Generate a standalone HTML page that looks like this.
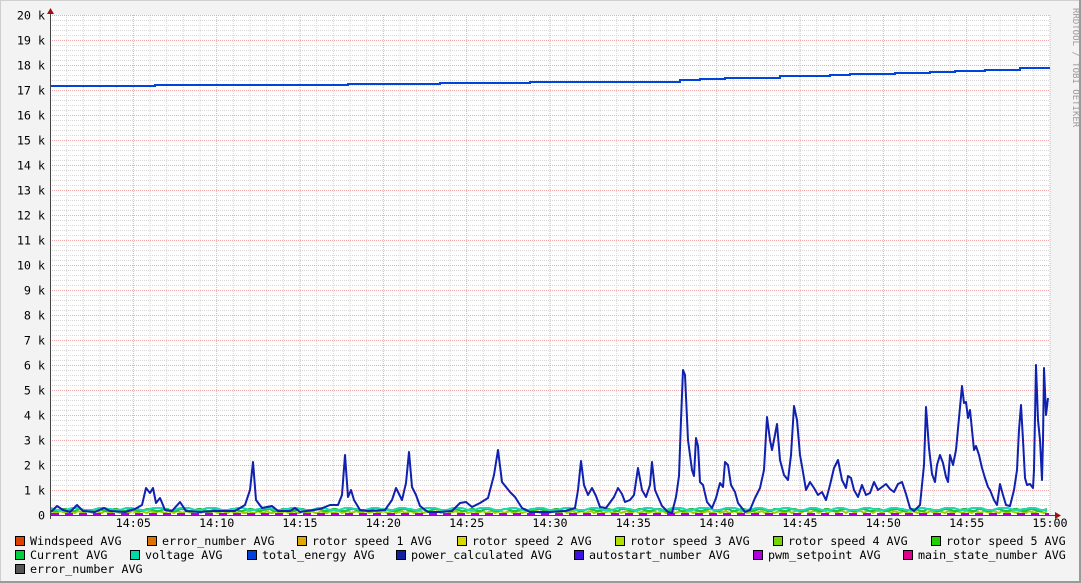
<!DOCTYPE html>
<html><head><meta charset="utf-8"><style>
html,body{margin:0;padding:0;background:#f3f3f3}
svg{display:block}
text{font-family:"DejaVu Sans Mono","Liberation Mono",monospace;font-size:11.7px;fill:#000}
</style></head><body>
<svg id="s" width="1081" height="583" xmlns="http://www.w3.org/2000/svg">
<rect x="0" y="0" width="1081" height="583" fill="#f3f3f3"/>
<rect x="0.5" y="0.5" width="1080" height="582" fill="none" stroke="#cfcfcf"/>
<line x1="0" y1="582" x2="1081" y2="582" stroke="#9a9a9a" stroke-width="2"/>
<line x1="1080" y1="0" x2="1080" y2="583" stroke="#9a9a9a" stroke-width="2"/>
<rect x="50" y="15" width="1000" height="500" fill="#ffffff"/>
<g id="grid"></g>
<g id="data"></g>
<line x1="50" y1="515.5" x2="1056" y2="515.5" stroke="#444"/>
<line x1="50.5" y1="10" x2="50.5" y2="519" stroke="#444"/>
<path d="M47,14 L54,14 L50.5,8 Z" fill="#a01010"/>
<path d="M1055,512 L1055,519 L1061,515.5 Z" fill="#a01010"/>
<text x="1073" y="8" transform="rotate(90 1073 8)" style="font-size:9px;fill:#999">RRDTOOL / TOBI OETIKER</text>
<g id="lab"></g>
<g id="leg"></g>
</svg>
<script>
var NS="http://www.w3.org/2000/svg";
function el(p,t,a,txt){var e=document.createElementNS(NS,t);for(var k in a)e.setAttribute(k,a[k]);if(txt!=null)e.textContent=txt;p.appendChild(e);return e;}
var g=document.getElementById('grid'),lab=document.getElementById('lab'),leg=document.getElementById('leg'),d=document.getElementById('data');
for(var i=1;i<60;i++){var x=50+i*1000/60;if(i%5==0)continue;el(g,'line',{x1:x,y1:15,x2:x,y2:515,stroke:'#d8d8d8','stroke-dasharray':'1,1'});}
for(var j=0;j<100;j++){if(j%5==0)continue;var y=515-j*5+0.5;el(g,'line',{x1:50,y1:y,x2:1050,y2:y,stroke:'#d8d8d8','stroke-dasharray':'1,1'});}
for(var i=1;i<=12;i++){var x=50+i*1000/12;el(g,'line',{x1:x,y1:15,x2:x,y2:515,stroke:'#f0a8a8','stroke-dasharray':'1,1'});
 var t=i==12?'15:00':'14:'+(i*5<10?'0':'')+i*5;el(lab,'text',{x:x,y:527,'text-anchor':'middle'},t);}
for(var j=0;j<=20;j++){var y=515-j*25+0.5;if(j>0)el(g,'line',{x1:50,y1:y,x2:1050,y2:y,stroke:'#f0a8a8','stroke-dasharray':'1,1'});
 el(lab,'text',{x:45,y:y+4,'text-anchor':'end'},j==0?'0':j+' k');}
function lowline(y,c,w,n){var p=[];for(var x=51;x<=1049;x+=3){p.push(x+','+(y+Math.round(Math.sin(x*n)*1.2)));}el(d,'polyline',{points:p.join(' '),fill:'none',stroke:c,'stroke-width':w});}
lowline(512,'#9cd000',2,0.7);lowline(510,'#20c040',2,0.37);lowline(509,'#20d8b0',2,0.23);
el(d,'line',{x1:51,y1:514,x2:1049,y2:514,stroke:'#b000e0','stroke-width':2,'stroke-dasharray':'8,6'});
var te=[[51,86],[155,86],[155,85],[348,85],[348,84],[440,84],[440,83],[530,83],[530,82],[630,82],[680,80],[700,79],[725,78],[780,76],[830,75],[850,74],[895,73],[930,72],[955,71],[985,70],[1020,68],[1049,67]];
var tp=[];for(var i=0;i<te.length;i++){if(i>0)tp.push(te[i][0]+','+te[i-1][1]);tp.push(te[i][0]+','+te[i][1]);}
el(d,'polyline',{points:tp.join(' '),fill:'none',stroke:'#0044dd','stroke-width':2});
var k=[[51,512],[57,506],[63,510],[70,512],[77,505],[83,511],[95,512],[104,508],[110,511],[125,512],[135,509],[142,505],[146,488],[150,493],[153,488],[156,503],[160,498],[165,510],[172,511],[180,502],[186,511],[200,512],[215,511],[235,511],[245,505],[250,490],[253,462],[256,500],[262,508],[272,506],[278,511],[290,511],[295,508],[300,512],[320,509],[330,505],[338,505],[342,495],[345,455],[348,497],[351,490],[354,500],[360,510],[368,511],[385,510],[392,500],[396,488],[402,500],[406,483],[409,452],[412,487],[416,495],[420,506],[428,512],[440,512],[452,511],[460,503],[466,502],[472,507],[480,503],[488,498],[494,475],[498,450],[502,482],[510,492],[515,497],[522,508],[530,512],[540,512],[550,512],[565,511],[575,508],[578,490],[581,461],[584,485],[588,495],[592,488],[596,496],[600,507],[606,508],[614,497],[618,488],[622,494],[625,502],[630,500],[634,495],[638,468],[642,490],[646,497],[650,485],[652,462],[655,490],[658,497],[662,506],[668,512],[672,513],[676,497],[679,476],[681,420],[683,370],[685,375],[688,440],[692,470],[694,476],[696,438],[698,446],[700,482],[703,485],[707,502],[712,508],[716,498],[720,483],[723,487],[725,462],[728,465],[731,485],[735,492],[738,503],[745,512],[750,510],[755,498],[760,488],[764,470],[767,417],[770,440],[772,450],[774,440],[777,424],[780,460],[784,475],[788,480],[791,455],[794,406],[797,420],[800,455],[803,472],[806,490],[810,482],[814,488],[818,495],[822,492],[826,500],[830,485],[834,468],[838,460],[842,480],[846,488],[848,476],[851,478],[854,490],[858,497],[862,485],[866,495],[870,493],[874,482],[878,490],[882,487],[886,484],[890,489],[894,492],[898,484],[902,482],[906,494],[910,508],[914,511],[920,505],[924,465],[926,407],[929,448],[932,474],[935,482],[937,465],[940,455],[943,463],[946,477],[948,482],[950,455],[953,465],[956,450],[959,418],[962,386],[964,403],[966,402],[968,418],[970,410],[972,430],[974,450],[976,446],[979,455],[982,468],[985,478],[988,487],[990,490],[994,500],[997,505],[1000,484],[1003,495],[1006,505],[1010,506],[1014,490],[1017,470],[1019,430],[1021,405],[1023,440],[1025,478],[1027,485],[1030,484],[1033,488],[1034,470],[1036,365],[1038,420],[1040,440],[1042,480],[1043,440],[1044,368],[1046,415],[1048,398]];
el(d,'polyline',{points:k.map(function(p){return p.join(',')}).join(' '),fill:'none',stroke:'#1020b0','stroke-width':2,'stroke-linejoin':'round'});
var L=[[[15,'#e04000','Windspeed AVG'],[147,'#e07000','error_number AVG'],[297,'#e0a800','rotor speed 1 AVG'],[457,'#d8d800','rotor speed 2 AVG'],[615,'#b0e000','rotor speed 3 AVG'],[773,'#70d800','rotor speed 4 AVG'],[931,'#20d000','rotor speed 5 AVG']],
[[15,'#00d040','Current AVG'],[130,'#00d8a8','voltage AVG'],[247,'#0040e0','total_energy AVG'],[396,'#1020a0','power_calculated AVG'],[574,'#4010e0','autostart_number AVG'],[753,'#b000e0','pwm_setpoint AVG'],[903,'#e00090','main_state_number AVG']],
[[15,'#555555','error_number AVG']]];
for(var r=0;r<3;r++){var y=541+r*14;L[r].forEach(function(it){el(leg,'rect',{x:it[0]+0.5,y:y-4.5,width:9,height:9,fill:it[1],stroke:'#000','stroke-width':1});el(leg,'text',{x:it[0]+15,y:y+4},it[2]);});}
</script>
</body></html>
